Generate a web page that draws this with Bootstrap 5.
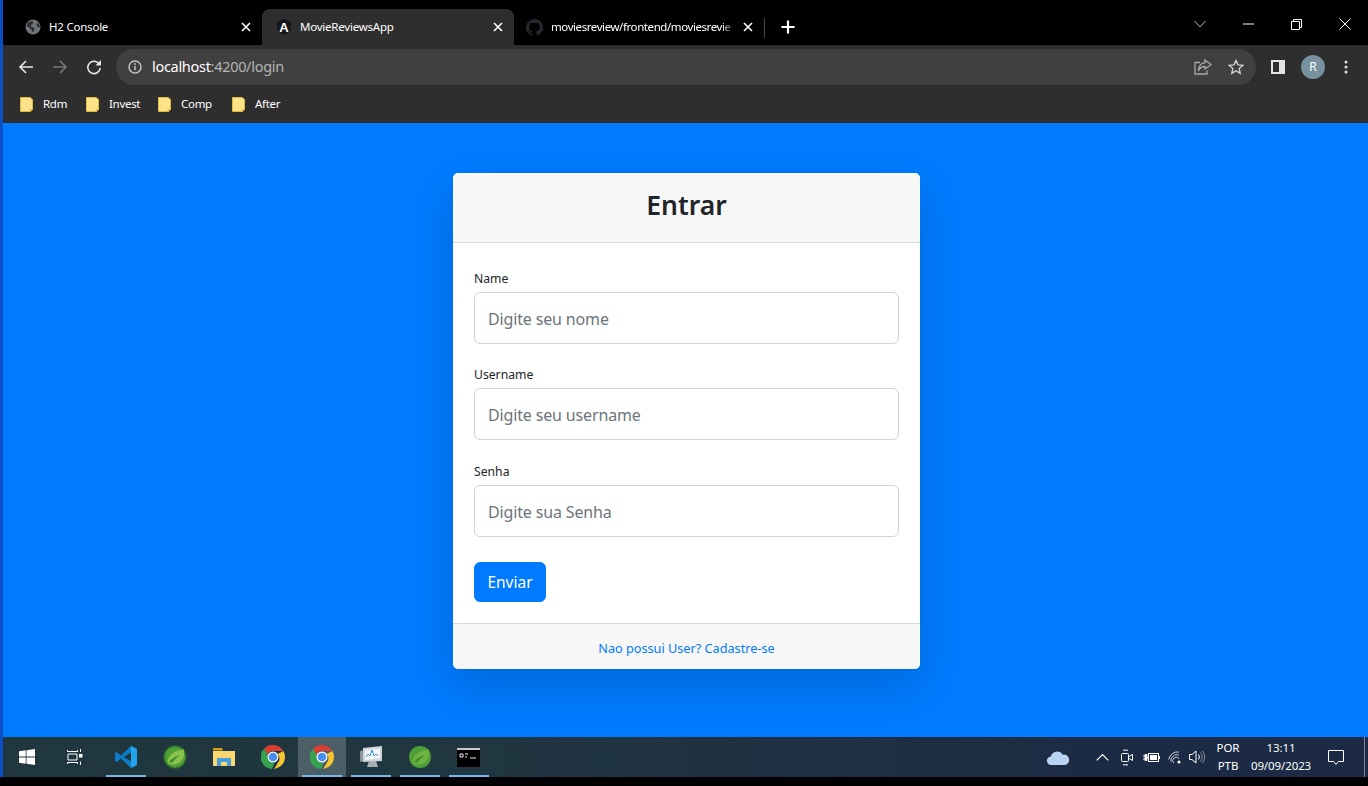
<!DOCTYPE html>
<html lang="pt-BR">
<head>
    <meta charset="UTF-8">
    <title>MovieReviewsApp</title>
    <link href="https://cdn.jsdelivr.net/npm/bootstrap@5.3.2/dist/css/bootstrap.min.css" rel="stylesheet">
    <style>
        html, body { height: 100%; overflow: hidden; }
        body { background: #000; font-family: "Noto Sans", "Open Sans", sans-serif; }
        svg { display: block; flex: none; }

        .desk { height: 777px; border-left: 3px solid #0a50c4; }

        /* abas do navegador */
        .tabstrip { height: 45px; background: #000; color: #fff; font-size: 11.5px; }
        .brow-tab { height: 36px; padding-right: 8px; gap: 8px; }
        .brow-tab.t1 { width: 259px; padding-left: 22px; }
        .brow-tab.t2 { width: 252px; padding-left: 14px; background: #2e2e2e; border-radius: 8px 8px 0 0; }
        .brow-tab.t3 { width: 250px; padding-left: 12px; }
        .tab-title { flex: 1 1 0; min-width: 0; white-space: nowrap; overflow: hidden; letter-spacing: -.22px; }
        .t3 .tab-title { margin-right: -4px; letter-spacing: -.42px; -webkit-mask-image: linear-gradient(90deg, #000 92%, transparent); mask-image: linear-gradient(90deg, #000 92%, transparent); }
        .tab-sep { width: 1px; height: 20px; background: #4a4a4a; margin-bottom: 7px; }
        .new-tab { margin: 0 0 0 15px; padding-bottom: 0; }
        .win-btn { width: 48px; height: 48px; margin-top: 0; }
        .win-btn.win-close { padding-left: 2px; }

        /* barra de endereco */
        .toolbar { height: 40px; background: #2e2e2e; padding: 4px 0 0 6px; }
        .tool-btn { width: 34px; height: 36px; }
        .tool-btn.avatar-btn { margin-left: 1px; }
        .tool-btn.dots { width: 30px; margin-left: 1px; }
        .omnibox { width: 1140px; height: 36px; margin: 0 5px; padding: 0 12px 0 12px; background: #404040; border-radius: 18px; font-size: 14.5px; letter-spacing: -.3px; color: #b4b4b4; }
        .omnibox b { font-weight: 400; color: #fff; }
        .url-text { margin-left: 10px; }
        .avatar { width: 24px; height: 24px; border-radius: 50%; background: #78919f; color: #fff; font-size: 12px; }

        /* favoritos */
        .bookmarks { height: 38px; background: #2e2e2e; color: #fff; font-size: 11.5px; letter-spacing: -.3px; padding-left: 17px; }
        .bm-item { gap: 10px; }
        .bm-item.b1 { width: 66px; }
        .bm-item.b2 { width: 72px; }
        .bm-item.b3 { width: 74px; }

        /* pagina */
        .page-area { background: #007bff; padding: 50px 0 0 2px; }
        .login-card { width: 467px; height: 496px; border: 0; box-shadow: 0 16px 48px rgba(0, 0, 0, .16); color: #212529; }
        .login-card .card-header { height: 70px; padding: 0; background: #f7f7f7; border-bottom-color: #d9d9d9; }
        .login-title { font-size: 26.5px; font-weight: 600; line-height: 64px; margin: 0; }
        .login-card .card-body { padding: 25px 21px 21px; }
        .field-box { margin-bottom: 20.3px; }
        .field-box.last-box { margin-bottom: 25.4px; }
        .field-box label { display: block; font-size: 12.2px; line-height: 20px; padding-top: 1px; margin-bottom: 3px; }
        .field-input { height: 52px; padding: 2px 13px 0; font-size: 16px; letter-spacing: -.15px; color: #212529; border-color: #ced4da; }
        .field-input::placeholder { color: #6c757d; opacity: 1; }
        .send-btn { width: 72px; height: 40px; padding: 2px 0 0; font-size: 15.5px; background: #007bff; border-color: #007bff; }
        .login-card .card-footer { height: 46px; padding: 5px 0 0; background: #f7f7f7; border-top-color: #d9d9d9; font-size: 12.7px; }
        .login-card .card-footer a { color: #007bff; text-decoration: none; }

        /* barra de tarefas */
        .taskbar { height: 40px; background: linear-gradient(90deg, #20373f 0%, #203640 35%, #1c2b44 80%, #1c2a46 100%); color: #fff; font-size: 11.5px; line-height: 18px; letter-spacing: -.1px; }
        .start-btn { width: 48px; height: 40px; }
        .task-item { width: 49px; height: 40px; }
        .task-first { margin-left: 2px; }
        .task-item.is-open::after { content: ""; position: absolute; left: 5px; right: 4px; bottom: 0; height: 2px; background: #76b9ed; }
        .task-item.is-active { background: #4c5f67; background-clip: content-box; padding-left: 1px; }
        .tray-item { height: 40px; }
        .tray-cloud { width: 40px; margin-right: 12px; }
        .tray-w24 { width: 24px; }
        .tray-w25 { width: 25px; }
        .tray-w22 { width: 22px; }
        .tray-lang { width: 40px; margin-right: 2px; text-align: center; }
        .tray-clock { width: 62px; text-align: center; }
        .tray-notify { width: 48px; margin-right: 4px; }
        .show-desk { width: 4px; height: 40px; border-left: 1px solid #7d8a95; }
    </style>
</head>
<body>

<div class="desk d-flex flex-column">
    <!-- abas -->
    <div class="tabstrip d-flex align-items-end">
        <div class="brow-tab t1 d-flex align-items-center">
            <svg width="16" height="16" viewBox="0 0 16 16"><circle cx="8" cy="8" r="7.500" fill="#6f7276"/><path d="M3 3.500 7 2l1.500 1.500L7 5.500 5.500 6l1 2 2.500.5.5 2-1.500 3L6.500 11 4.500 8.500 1.500 7zM11 5l2.500-1 1.500 4-2 .5z" fill="#2c2d2f"/></svg>
            <span class="tab-title">H2 Console</span>
            <svg width="16" height="16" viewBox="0 0 16 16"><path d="M4 4l8 8M12 4l-8 8" stroke="#fff" stroke-width="1.600"/></svg>
        </div>
        <div class="brow-tab t2 d-flex align-items-center">
            <svg width="16" height="16" viewBox="0 0 16 16"><path d="M8 0l7.500 2.700-1.200 9.800L8 16l-6.300-3.500L.5 2.700z" fill="#17171b"/><text x="8" y="13" text-anchor="middle" font-family="Liberation Sans, sans-serif" font-weight="700" font-size="13" fill="#fff">A</text></svg>
            <span class="tab-title">MovieReviewsApp</span>
            <svg width="16" height="16" viewBox="0 0 16 16"><path d="M4 4l8 8M12 4l-8 8" stroke="#fff" stroke-width="1.600"/></svg>
        </div>
        <div class="brow-tab t3 d-flex align-items-center">
            <svg width="17" height="17" viewBox="0 0 16 16"><path fill="#24292f" d="M8 0C3.58 0 0 3.58 0 8c0 3.54 2.29 6.53 5.47 7.59.4.07.55-.17.55-.38 0-.19-.01-.82-.01-1.490-2.010.37-2.530-.49-2.690-.94-.09-.23-.48-.94-.82-1.130-.28-.15-.68-.52-.01-.53.63-.01 1.080.58 1.230.82.72 1.210 1.870.87 2.330.66.07-.52.28-.87.51-1.070-1.780-.2-3.640-.89-3.640-3.950 0-.87.31-1.590.82-2.150-.08-.2-.36-1.020.08-2.120 0 0 .67-.21 2.200.82.64-.18 1.320-.27 2-.27.68 0 1.360.09 2 .27 1.530-1.040 2.200-.82 2.200-.82.44 1.100.16 1.920.08 2.120.51.56.82 1.270.82 2.150 0 3.070-1.870 3.750-3.650 3.950.29.25.54.73.54 1.480 0 1.070-.01 1.930-.01 2.200 0 .21.15.46.55.38A8.013 8.013 0 0016 8c0-4.420-3.580-8-8-8z"/></svg>
            <span class="tab-title">moviesreview/frontend/moviesrevie</span>
            <svg width="16" height="16" viewBox="0 0 16 16"><path d="M4 4l8 8M12 4l-8 8" stroke="#fff" stroke-width="1.600"/></svg>
        </div>
        <div class="tab-sep"></div>
        <div class="new-tab brow-tab d-flex align-items-center">
            <svg width="16" height="16" viewBox="0 0 16 16"><path d="M8 1.500v13M1.500 8h13" stroke="#fff" stroke-width="2.200"/></svg>
        </div>
        <div class="d-flex ms-auto align-self-start">
            <div class="win-btn d-flex align-items-center justify-content-center"><svg width="12" height="8" viewBox="0 0 12 8"><path d="M.5 1 6 6.800 11.500 1" fill="none" stroke="#bdbdbd"/></svg></div>
            <div class="win-btn d-flex align-items-center justify-content-center"><svg width="11" height="2" viewBox="0 0 11 2"><path d="M0 1h11" stroke="#fff"/></svg></div>
            <div class="win-btn d-flex align-items-center justify-content-center"><svg width="11" height="11" viewBox="0 0 11 11"><path d="M.5 2.500h8v8h-8zM2.500 2.500v-2h8v8h-2" fill="none" stroke="#fff"/></svg></div>
            <div class="win-btn win-close d-flex align-items-center justify-content-center"><svg width="12" height="12" viewBox="0 0 12 12"><path d="M.5.5l11 11M11.500.5l-11 11" stroke="#fff"/></svg></div>
        </div>
    </div>

    <!-- barra de endereco -->
    <div class="toolbar d-flex align-items-center">
        <div class="tool-btn d-flex align-items-center justify-content-center"><svg width="16" height="16" viewBox="0 0 16 16"><path d="M15 8H2M8 2 2 8l6 6" fill="none" stroke="#e8e8e8" stroke-width="1.600"/></svg></div>
        <div class="tool-btn d-flex align-items-center justify-content-center"><svg width="16" height="16" viewBox="0 0 16 16"><path d="M1 8h13M8 2l6 6-6 6" fill="none" stroke="#777" stroke-width="1.600"/></svg></div>
        <div class="tool-btn d-flex align-items-center justify-content-center"><svg width="16" height="16" viewBox="0 0 16 16"><path d="M13.500 5.500A6.200 6.200 0 1 0 14.200 9" fill="none" stroke="#e8e8e8" stroke-width="1.600"/><path d="M15 1v5.500H9.500z" fill="#e8e8e8"/></svg></div>
        <div class="omnibox d-flex align-items-center">
            <svg width="14" height="14" viewBox="0 0 14 14"><circle cx="7" cy="7" r="6" fill="none" stroke="#c4c4c4" stroke-width="1.400"/><path d="M7 6v4.200" stroke="#c4c4c4" stroke-width="1.500"/><circle cx="7" cy="4" r=".9" fill="#c4c4c4"/></svg>
            <span class="url-text flex-grow-1"><b>localhost</b>:4200/login</span>
            <svg class="me-3" width="18" height="16" viewBox="0 0 18 16"><path d="M6 3.500H1v11.500h12v-3.500" fill="none" stroke="#a8a8a8" stroke-width="1.300"/><path d="M11 1l6 4.500L11 10V7.500C7.500 7.500 5.500 9 4.500 12 4.500 7.500 7 4 11 3.500z" fill="none" stroke="#a8a8a8" stroke-width="1.300"/></svg>
            <svg width="16" height="16" viewBox="0 0 16 16"><path d="M8 1.500l2 4.400 4.800.5-3.600 3.200 1 4.700L8 11.900l-4.200 2.400 1-4.700L1.200 6.400 6 5.900z" fill="none" stroke="#d0d0d0" stroke-width="1.400"/></svg>
        </div>
        <div class="tool-btn d-flex align-items-center justify-content-center"><svg width="14" height="14" viewBox="0 0 14 14"><rect width="14" height="14" fill="#e4e4e4"/><rect x="2" y="2" width="6" height="10" fill="#2e2e2e"/></svg></div>
        <div class="tool-btn avatar-btn d-flex align-items-center justify-content-center"><div class="avatar d-flex align-items-center justify-content-center">R</div></div>
        <div class="tool-btn dots d-flex align-items-center justify-content-center"><svg width="4" height="14" viewBox="0 0 4 14"><circle cx="2" cy="2" r="1.500" fill="#dedede"/><circle cx="2" cy="7" r="1.500" fill="#dedede"/><circle cx="2" cy="12" r="1.500" fill="#dedede"/></svg></div>
    </div>

    <!-- favoritos -->
    <div class="bookmarks d-flex align-items-center">
        <div class="bm-item b1 d-flex align-items-center"><svg width="13" height="15" viewBox="0 0 13 15"><path d="M.5.5h9.500l2.500 2v10l-2 2H.5z" fill="#fde38a" stroke="#e2b93f"/><path d="M10 14.500v-2h2.500" fill="none" stroke="#e2b93f"/></svg><span>Rdm</span></div>
        <div class="bm-item b2 d-flex align-items-center"><svg width="13" height="15" viewBox="0 0 13 15"><path d="M.5.5h9.500l2.500 2v10l-2 2H.5z" fill="#fde38a" stroke="#e2b93f"/><path d="M10 14.500v-2h2.500" fill="none" stroke="#e2b93f"/></svg><span>Invest</span></div>
        <div class="bm-item b3 d-flex align-items-center"><svg width="13" height="15" viewBox="0 0 13 15"><path d="M.5.5h9.500l2.500 2v10l-2 2H.5z" fill="#fde38a" stroke="#e2b93f"/><path d="M10 14.500v-2h2.500" fill="none" stroke="#e2b93f"/></svg><span>Comp</span></div>
        <div class="bm-item d-flex align-items-center"><svg width="13" height="15" viewBox="0 0 13 15"><path d="M.5.5h9.500l2.500 2v10l-2 2H.5z" fill="#fde38a" stroke="#e2b93f"/><path d="M10 14.500v-2h2.500" fill="none" stroke="#e2b93f"/></svg><span>After</span></div>
    </div>

    <!-- conteudo -->
    <main class="page-area flex-grow-1">
        <div class="card login-card mx-auto">
            <div class="card-header text-center">
                <h3 class="login-title">Entrar</h3>
            </div>
            <div class="card-body">
                <form>
                    <div class="field-box">
                        <label for="name">Name</label>
                        <input type="text" class="form-control field-input" id="name" placeholder="Digite seu nome">
                    </div>
                    <div class="field-box">
                        <label for="username">Username</label>
                        <input type="text" class="form-control field-input" id="username" placeholder="Digite seu username">
                    </div>
                    <div class="field-box last-box">
                        <label for="password">Senha</label>
                        <input type="password" class="form-control field-input" id="password" placeholder="Digite sua Senha">
                    </div>
                    <button type="button" class="btn btn-primary send-btn">Enviar</button>
                </form>
            </div>
            <div class="card-footer d-flex align-items-center justify-content-center">
                <a href="#">Nao possui User? Cadastre-se</a>
            </div>
        </div>
    </main>

    <!-- barra de tarefas -->
    <div class="taskbar d-flex align-items-center">
        <div class="start-btn d-flex align-items-center justify-content-center"><svg width="16" height="16" viewBox="0 0 16 16"><path d="M0 2.300 6.700 1.300v6.300H0zM7.500 1.200 16 0v7.600H7.500zM0 8.400h6.700v6.300L0 13.700zM7.500 8.400H16V16L7.500 14.800z" fill="#fff"/></svg></div>
        <div class="start-btn d-flex align-items-center justify-content-center"><svg width="16" height="16" viewBox="0 0 16 16"><path d="M.5 1v1.500h10V1M.5 15v-1.500h10V15M1 5h9v6H1z" fill="none" stroke="#fff"/><path d="M13.500 0v3M13.500 12.500V16" stroke="#fff"/><rect x="12" y="5" width="3.500" height="3.500" fill="#fff"/></svg></div>

        <div class="task-item task-first is-open position-relative d-flex align-items-center justify-content-center"><svg width="24" height="24" viewBox="0 0 24 24"><path d="M17 1l6 3v16l-6 3-10-9.500L2.700 17 1 16V8l1.700-1 4.300 3.500z" fill="#0d7cc6"/><path d="M17 1l6 3v16l-6 3z" fill="#22a3ec"/><path d="M17 7.500 10 12l7 4.500z" fill="#20363f"/></svg></div>
        <div class="task-item d-flex align-items-center justify-content-center"><svg width="24" height="24" viewBox="0 0 24 24"><circle cx="12" cy="12" r="11" fill="#4f9f38" stroke="#2a6a22" stroke-width="2" stroke-dasharray="2 1.500"/><path d="M4.500 18C4.500 10 12 5 21 4.500c1 8-3 15-10 15-2.500 0-4.500-.5-6.500-1.500z" fill="#8bc34a"/><path d="M6 17c3-4 7-6 11-7-3 2-6 5-8 8z" fill="#3e8a2d"/></svg></div>
        <div class="task-item d-flex align-items-center justify-content-center"><svg width="22" height="18" viewBox="0 0 22 18"><path d="M0 1A1 1 0 0 1 1 0h8l1 2.500H0z" fill="#d99c16"/><path d="M0 3h22v14a1 1 0 0 1-1 1H1a1 1 0 0 1-1-1z" fill="#fbd770"/><path d="M4 18v-8h14v8h-4v-4H8v4z" fill="#4a9edb"/></svg></div>
        <div class="task-item d-flex align-items-center justify-content-center">
            <svg width="24" height="24" viewBox="0 0 24 24"><path d="M12 0a12 12 0 0 1 10.400 6H12a6 6 0 0 0-5.600 3.800L3 3.700A12 12 0 0 1 12 0z" fill="#dc3e32"/><path d="M22.400 6a12 12 0 0 1-9.200 17.900l3.800-6.500A6 6 0 0 0 16.600 9z" fill="#f7c52e"/><path d="M3 3.700l4.800 8.400a5 5 0 0 0 5.700 5.800L11 23.900A12 12 0 0 1 3 3.700z" fill="#35a24f"/><circle cx="12" cy="12" r="5.500" fill="#fff"/><circle cx="12" cy="12" r="4.300" fill="#4a8df0"/></svg>
        </div>
        <div class="task-item is-open is-active position-relative d-flex align-items-center justify-content-center">
            <svg width="24" height="24" viewBox="0 0 24 24"><path d="M12 0a12 12 0 0 1 10.400 6H12a6 6 0 0 0-5.600 3.800L3 3.700A12 12 0 0 1 12 0z" fill="#dc3e32"/><path d="M22.400 6a12 12 0 0 1-9.200 17.900l3.800-6.500A6 6 0 0 0 16.600 9z" fill="#f7c52e"/><path d="M3 3.700l4.800 8.400a5 5 0 0 0 5.700 5.800L11 23.900A12 12 0 0 1 3 3.700z" fill="#35a24f"/><circle cx="12" cy="12" r="5.500" fill="#fff"/><circle cx="12" cy="12" r="4.300" fill="#4a8df0"/></svg>
        </div>
        <div class="task-item is-open position-relative d-flex align-items-center justify-content-center"><svg width="24" height="22" viewBox="0 0 24 22"><path d="M1 5l4-1v11l-4 1z" fill="#8d9496"/><path d="M4 2l19-2v15L4 16z" fill="#cfd6d9"/><path d="M6 4l15-1.500v10L6 14z" fill="#eef4f7"/><path d="M7 11l2-3 2 2 2-6 2 6 2-2 2 2" fill="none" stroke="#3f93c9"/><path d="M10 15h7l2 6H8z" fill="#a9b0b3"/></svg></div>
        <div class="task-item is-open position-relative d-flex align-items-center justify-content-center"><svg width="24" height="24" viewBox="0 0 24 24"><circle cx="12" cy="12" r="11" fill="#4f9f38"/><path d="M4.500 18C4.500 10 12 5 21 4.500c1 8-3 15-10 15-2.500 0-4.500-.5-6.500-1.500z" fill="#6cb33f"/><path d="M6 17c3-4 7-6 11-7-3 2-6 5-8 8z" fill="#3e8a2d"/></svg></div>
        <div class="task-item is-open position-relative d-flex align-items-center justify-content-center"><svg width="23" height="19" viewBox="0 0 23 19"><rect width="23" height="19" fill="#000"/><rect width="23" height="2" fill="#c9c9c9"/><path d="M3 6h3v3H3zM8 6h3M8 9h2M13 10h6" fill="none" stroke="#eee"/></svg></div>

        <div class="d-flex align-items-center ms-auto">
            <div class="tray-item tray-cloud d-flex align-items-center justify-content-center"><svg width="24" height="15" viewBox="0 0 24 16"><path d="M5 16a4.500 4.500 0 0 1-.7-9A7 7 0 0 1 17 5a5.500 5.500 0 0 1 2.500 11z" fill="#b9d4f2"/></svg></div>
            <div class="tray-item tray-w24 d-flex align-items-center justify-content-center"><svg width="13" height="8" viewBox="0 0 13 8"><path d="M.7 7.300 6.500 1.500l5.800 5.800" fill="none" stroke="#fff" stroke-width="1.200"/></svg></div>
            <div class="tray-item tray-w25 d-flex align-items-center justify-content-center"><svg width="12" height="17" viewBox="0 0 12 17"><path d="M2 1.200h5M2 15.800h5" stroke="#fff"/><rect x=".5" y="4.500" width="7" height="8" rx="1" fill="none" stroke="#fff"/><path d="M8 7.500 11.500 5.500v6L8 9.500" fill="none" stroke="#fff"/></svg></div>
            <div class="tray-item tray-w25 d-flex align-items-center justify-content-center"><svg width="17" height="11" viewBox="0 0 17 11"><path d="M0 4h2M0 7h2M2 2.500h2v6H2zM4 5.500h2" stroke="#fff" fill="#fff"/><rect x="5.500" y="1.500" width="10" height="8" fill="none" stroke="#fff"/><rect x="7" y="3" width="7" height="5" fill="#fff"/><path d="M16.500 4v3" stroke="#fff"/></svg></div>
            <div class="tray-item tray-w22 d-flex align-items-center justify-content-center"><svg width="14" height="14" viewBox="0 0 14 14"><path d="M.7 9.500A9 9 0 0 1 11 2M3 11.500A6 6 0 0 1 11 5M5.500 13A3 3 0 0 1 11 8.500" fill="none" stroke="#c7ccd2"/><circle cx="11" cy="12" r="1.500" fill="#fff"/></svg></div>
            <div class="tray-item tray-w22 d-flex align-items-center justify-content-center"><svg width="16" height="14" viewBox="0 0 16 14"><path d="M.5 4.500H3L7 1v12L3 9.500H.5z" fill="none" stroke="#fff"/><path d="M9.500 4.500a4 4 0 0 1 0 5" fill="none" stroke="#fff"/><path d="M11.500 2.500a7 7 0 0 1 0 9M13.500 1a9.500 9.500 0 0 1 0 12" fill="none" stroke="#8a929b"/></svg></div>
            <div class="tray-lang"><div>POR</div><div>PTB</div></div>
            <div class="tray-clock"><div>13:11</div><div>09/09/2023</div></div>
            <div class="tray-item tray-notify d-flex align-items-center justify-content-center"><svg width="16" height="15" viewBox="0 0 16 15"><path d="M.5.500h15v11h-5l-2.500 3-2.500-3h-5z" fill="none" stroke="#fff"/></svg></div>
            <div class="show-desk"></div>
        </div>
    </div>
</div>

<script src="https://cdn.jsdelivr.net/npm/bootstrap@5.3.2/dist/js/bootstrap.bundle.min.js"></script>
</body>
</html>
